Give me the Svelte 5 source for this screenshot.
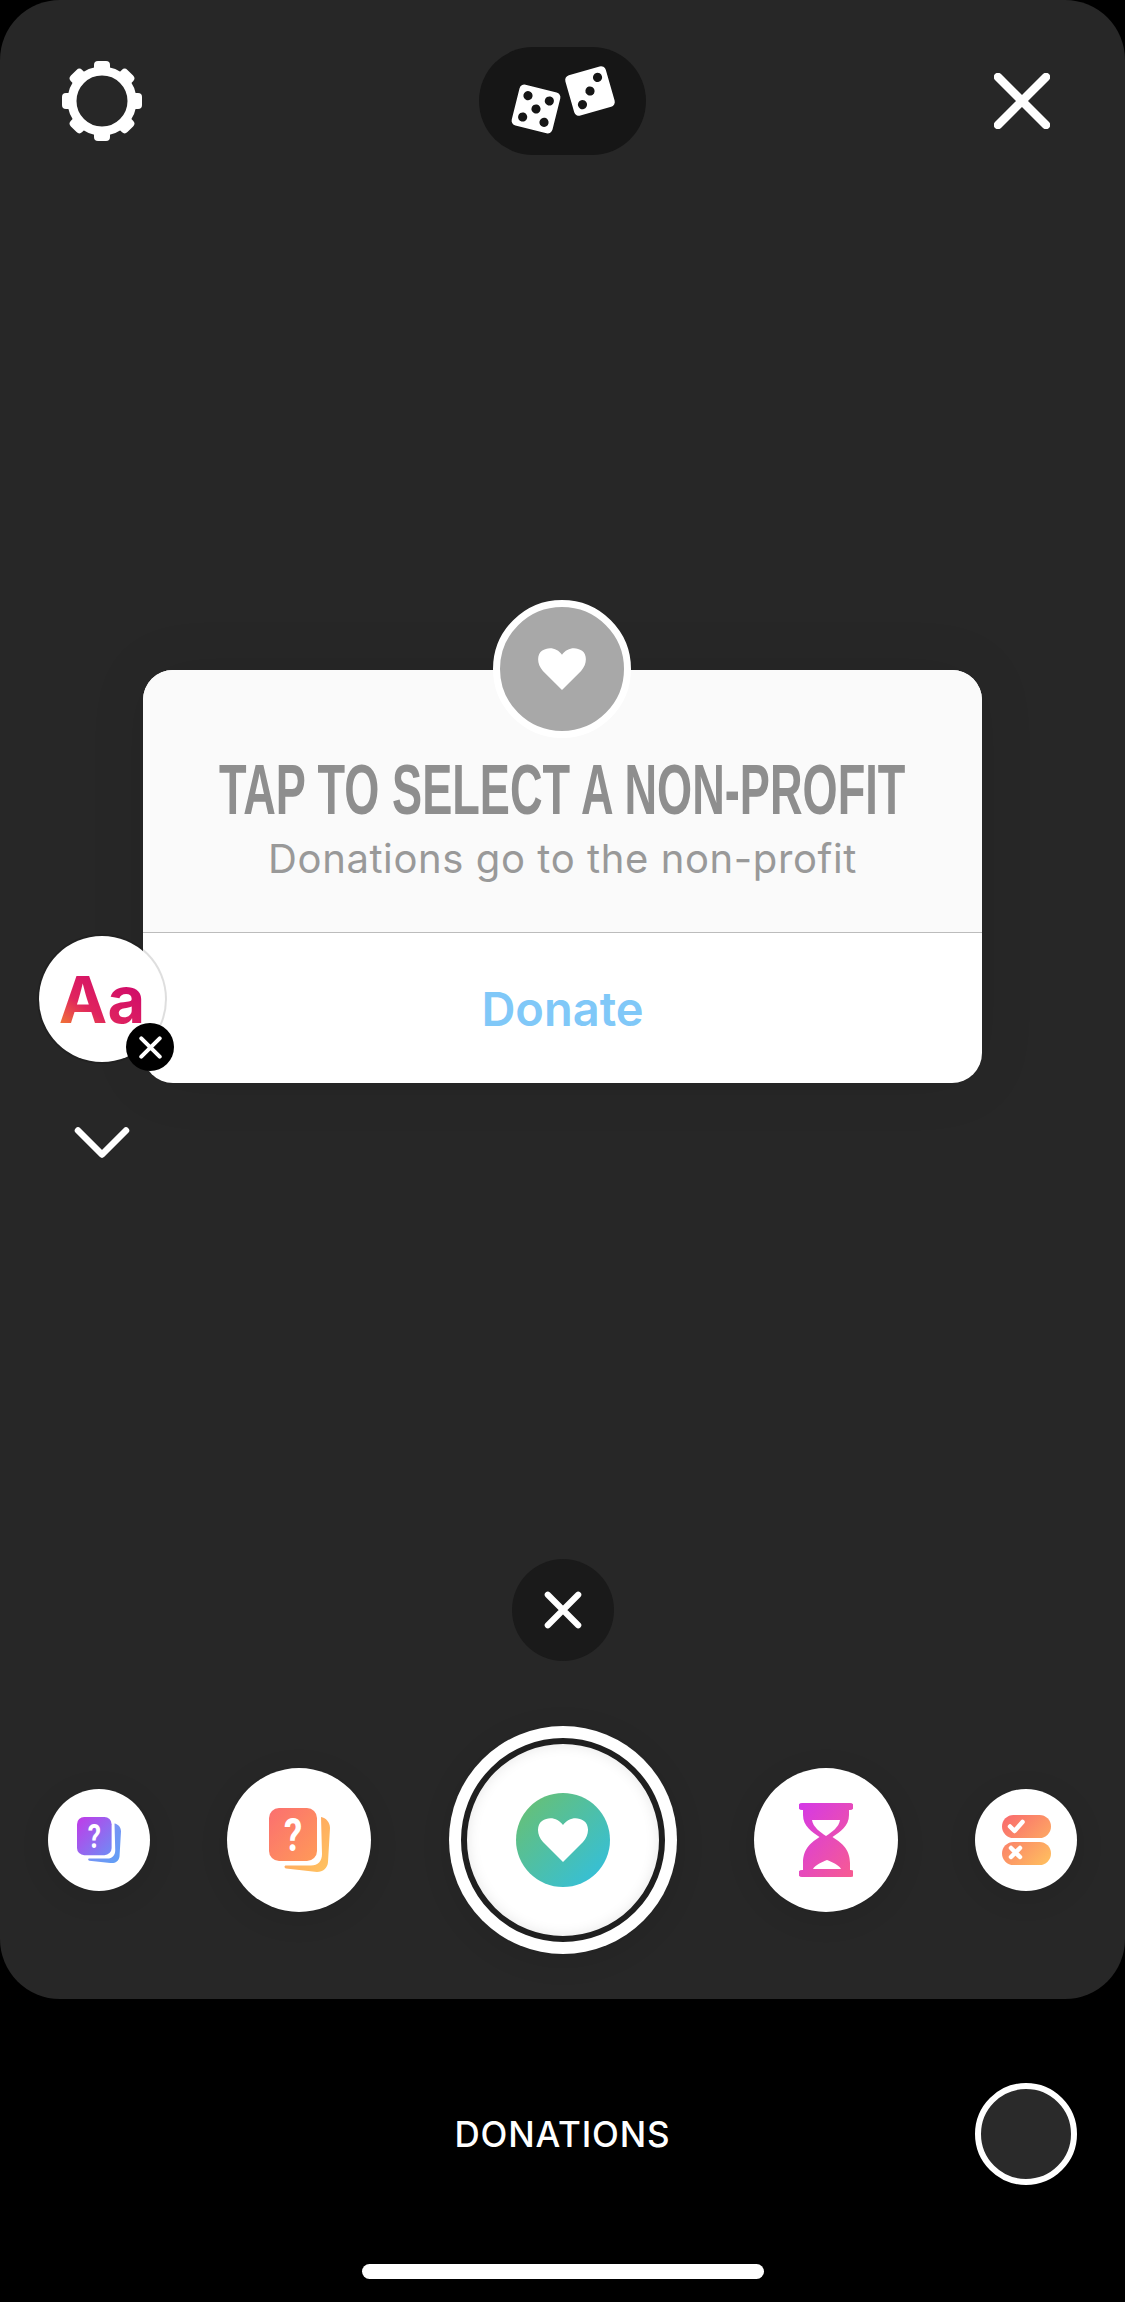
<script>
	const teeth = [0, 45, 90, 135, 180, 225, 270, 315];
	const fivePips = [[-11, -11], [11, -11], [0, 0], [-11, 11], [11, 11]];
	const threePips = [[-11, -11], [0, 0], [11, 11]];
</script>

{#snippet deck(id, from, to, back1, back2, width)}
	<svg viewBox="0 0 61 64" {width} height={width * 64 / 61}>
		<defs>
			<linearGradient id={id} x1="0" y1="0" x2="1" y2="1">
				<stop offset="0" stop-color={from} />
				<stop offset="1" stop-color={to} />
			</linearGradient>
			<linearGradient id={id + 'b'} x1="0" y1="0" x2="1" y2="1">
				<stop offset="0" stop-color={back1} />
				<stop offset="1" stop-color={back2} />
			</linearGradient>
		</defs>
		<rect width="48" height="53" rx="10" fill="url(#{id})" />
		<path
			d="M52 9C57 10 61 14 61 20L59 54C58.7 60 54 64 48 64L17 60.5C15 60 15 57.5 17 57.5L42 57.5C49 57.5 53 53 53 46Z"
			fill="url(#{id}b)"
		/>
		<text transform="translate(24 43) scale(0.78 1)" text-anchor="middle" class="deck-mark">?</text>
	</svg>
{/snippet}

{#snippet cross(size, weight)}
	<svg viewBox="0 0 40 40" width={size} height={size}>
		<path d="M4 4L36 36M36 4L4 36" stroke="#fff" stroke-width={weight} stroke-linecap="round" />
	</svg>
{/snippet}

<div class="screen">
	<div class="stage">
		<header class="topbar">
			<svg class="gear" viewBox="-42 -42 84 84" width="84" height="84">
				{#each teeth as angle}
					<rect x="-8" y="-40" width="16" height="14" rx="4" fill="#fff" transform="rotate({angle})" />
				{/each}
				<circle r="30" fill="none" stroke="#fff" stroke-width="9" />
			</svg>

			<div class="dice-pill">
				<svg viewBox="0 0 125 95" width="125" height="95">
					<g transform="translate(36 55) rotate(14)">
						<rect x="-21" y="-21" width="42" height="42" rx="5" fill="#fff" />
						{#each fivePips as [x, y]}
							<circle cx={x} cy={y} r="4.6" fill="#161616" />
						{/each}
					</g>
					<g transform="translate(90 37) rotate(-16)">
						<rect x="-21" y="-21" width="42" height="42" rx="5" fill="#fff" />
						{#each threePips as [x, y]}
							<circle cx={-x} cy={y} r="4.6" fill="#161616" />
						{/each}
					</g>
				</svg>
			</div>

			<svg class="close" viewBox="0 0 56 56" width="56" height="56">
				<path d="M4 4L52 52M52 4L4 52" stroke="#fff" stroke-width="8.5" stroke-linecap="round" />
			</svg>
		</header>

		<aside class="side-tools">
			<div class="font-sticker">
				<span class="aa">Aa</span>
				<span class="badge">{@render cross(23, 7)}</span>
			</div>
			<svg viewBox="0 0 56 32" width="56" height="32">
				<path d="M4 3.5L28 27.5L52 3.5" fill="none" stroke="#fff" stroke-width="6.5" stroke-linecap="round" stroke-linejoin="round" />
			</svg>
		</aside>

		<section class="card">
			<div class="card-heart">
				<svg viewBox="0 0 50 44" width="48" height="42">
					<path
						d="M25 44L5 24C-1.500 17 -1.500 7 4 3C11 -2 20 0 25 7C30 0 39 -2 46 3C51.500 7 51.500 17 45 24Z"
						fill="#fff"
					/>
				</svg>
			</div>
			<div class="card-head">
				<h1><span>TAP TO SELECT A NON-PROFIT</span></h1>
				<p>Donations go to the non-profit</p>
			</div>
			<div class="card-foot">Donate</div>
		</section>

		<button class="dismiss" aria-label="Dismiss">{@render cross(38, 6.5)}</button>

		<div class="tray">
			<div class="tool small">
				{@render deck('deckA', '#c13ae8', '#6f8cf5', '#8a8af5', '#5fa0f5', 44)}
			</div>
			<div class="tool">
				{@render deck('deckB', '#fb6f70', '#ff9a58', '#ff9a60', '#ffc460', 61)}
			</div>
			<div class="tool main">
				<div class="main-inner">
					<div class="main-badge">
						<svg viewBox="0 0 50 44" width="50" height="44">
							<path
								d="M25 44L5 24C-1.500 17 -1.500 7 4 3C11 -2 20 0 25 7C30 0 39 -2 46 3C51.500 7 51.500 17 45 24Z"
								fill="#fff"
							/>
						</svg>
					</div>
				</div>
			</div>
			<div class="tool">
				<svg viewBox="0 0 54 74" width="54" height="74">
					<defs>
						<linearGradient id="glass" x1="0" y1="0" x2="1" y2="1">
							<stop offset="0" stop-color="#d438e8" />
							<stop offset="1" stop-color="#f85c90" />
						</linearGradient>
					</defs>
					<path
						d="M3 0H51A3 3 0 0 1 51 7H50V12C50 23 41 29 33.500 34C41 39 51 45 51 60V67H52A3.500 3.500 0 0 1 52 74H3A3.500 3.500 0 0 1 3 67H4V60C4 45 13 39 20.500 34C13 29 4 23 4 12V7H3A3 3 0 0 1 3 0Z"
						fill="url(#glass)"
					/>
					<path d="M13 17H41C40 24 33 29 27 33C21 29 14 24 13 17Z" fill="#fff" />
					<path d="M14 66C16 62 23 59 28 57C33 59 40 62 42 66Z" fill="#fff" />
				</svg>
			</div>
			<div class="tool small">
				<svg viewBox="0 0 49 50" width="49" height="50">
					<defs>
						<linearGradient id="poll" gradientUnits="userSpaceOnUse" x1="0" y1="0" x2="49" y2="50">
							<stop offset="0" stop-color="#f9686e" />
							<stop offset="1" stop-color="#ffc25e" />
						</linearGradient>
					</defs>
					<rect width="49" height="23" rx="11.500" fill="url(#poll)" />
					<rect y="27" width="49" height="23" rx="11.500" fill="url(#poll)" />
					<path d="M8 11.500L12.500 16L20.500 7" fill="none" stroke="#fff" stroke-width="4.500" stroke-linecap="round" stroke-linejoin="round" />
					<path d="M9 33L18 42M18 33L9 42" stroke="#fff" stroke-width="4.500" stroke-linecap="round" />
				</svg>
			</div>
		</div>
	</div>

	<footer class="bottom">
		<div class="mode-row">
			<span></span>
			<span class="mode">DONATIONS</span>
			<span class="swatch"></span>
		</div>
		<div class="home-bar"></div>
	</footer>
</div>

<style>
	:global(body) {
		background: #000;
	}
	.screen {
		width: 1125px;
		height: 2302px;
		display: flex;
		flex-direction: column;
		overflow: hidden;
		background: #000;
		font-family: Inter, 'Liberation Sans', sans-serif;
	}
	.stage {
		position: relative;
		flex: none;
		height: 1999px;
		display: flex;
		flex-direction: column;
		align-items: center;
		background: #272727;
		border-radius: 60px;
	}
	.topbar {
		align-self: stretch;
		display: grid;
		grid-template-columns: 1fr auto 1fr;
		align-items: center;
		margin-top: 47px;
		padding: 0 60px;
		height: 108px;
	}
	.dice-pill {
		width: 167px;
		height: 108px;
		display: flex;
		align-items: center;
		justify-content: center;
		border-radius: 54px;
		background: #161616;
	}
	.close {
		justify-self: end;
		margin-right: 15px;
	}
	.card {
		position: relative;
		margin-top: 515px;
		width: 839px;
		height: 413px;
		display: flex;
		flex-direction: column;
		background: #fff;
		border-radius: 30px;
		box-shadow: 0 0 60px rgba(0, 0, 0, 0.08);
	}
	.card-heart {
		position: absolute;
		left: 350px;
		top: -70px;
		width: 124px;
		height: 124px;
		display: flex;
		align-items: center;
		justify-content: center;
		border: 7px solid #fff;
		border-radius: 50%;
		background: #a8a8a8;
	}
	.card-head {
		height: 263px;
		box-sizing: border-box;
		padding-top: 85px;
		display: flex;
		flex-direction: column;
		align-items: center;
		background: #fafafa;
		border-bottom: 1px solid #bcbcbc;
		border-radius: 30px 30px 0 0;
	}
	h1 {
		margin: 0;
		font-family: 'Liberation Sans', sans-serif;
		font-size: 70px;
		line-height: 70px;
		font-weight: 700;
		color: #8e8e8e;
		white-space: nowrap;
	}
	h1 span {
		display: inline-block;
		transform: scaleX(0.645);
	}
	.card-head p {
		margin: 10px 0 0;
		font-size: 40px;
		line-height: 48px;
		letter-spacing: 0.6px;
		color: #999;
		white-space: nowrap;
	}
	.card-foot {
		flex: 1;
		display: flex;
		align-items: center;
		justify-content: center;
		font-size: 47px;
		font-weight: 600;
		color: #80c8f8;
	}
	.side-tools {
		position: absolute;
		z-index: 2;
		left: 39px;
		top: 936px;
		width: 126px;
		display: flex;
		flex-direction: column;
		align-items: center;
		gap: 65px;
	}
	.font-sticker {
		position: relative;
		width: 126px;
		height: 126px;
		display: flex;
		align-items: center;
		justify-content: center;
		background: #fff;
		border-radius: 50%;
		box-shadow: 0 0 0 2px rgba(0, 0, 0, 0.13);
	}
	.aa {
		font-size: 65px;
		font-weight: 700;
		line-height: 1;
		background: linear-gradient(35deg, #f58a2b 0%, #e0245e 35%, #c9006f 100%);
		-webkit-background-clip: text;
		background-clip: text;
		color: transparent;
	}
	.badge {
		position: absolute;
		right: -9px;
		bottom: -9px;
		width: 48px;
		height: 48px;
		display: flex;
		align-items: center;
		justify-content: center;
		background: #000;
		border-radius: 50%;
	}
	.dismiss {
		margin-top: 476px;
		width: 102px;
		height: 102px;
		padding: 0;
		display: flex;
		align-items: center;
		justify-content: center;
		border: 0;
		border-radius: 50%;
		background: #1a1a1a;
	}
	.tray {
		align-self: stretch;
		margin-top: 65px;
		padding: 0 48px;
		display: flex;
		justify-content: space-between;
		align-items: center;
	}
	.tool {
		width: 144px;
		height: 144px;
		display: flex;
		align-items: center;
		justify-content: center;
		background: #fff;
		border-radius: 50%;
		box-shadow: 0 6px 30px rgba(0, 0, 0, 0.1);
	}
	.tool.small {
		width: 102px;
		height: 102px;
	}
	.tool.main {
		width: 228px;
		height: 228px;
	}
	.main-inner {
		width: 192px;
		height: 192px;
		box-sizing: content-box;
		display: flex;
		align-items: center;
		justify-content: center;
		background: #fff;
		border: 6px solid #1f1f1f;
		border-radius: 50%;
		box-shadow: inset 0 0 14px rgba(0, 0, 0, 0.1);
	}
	.main-badge {
		width: 94px;
		height: 94px;
		display: flex;
		align-items: center;
		justify-content: center;
		border-radius: 50%;
		background: linear-gradient(135deg, #6cc06c, #2fbfe4);
	}
	.bottom {
		flex: 1;
		padding-top: 84px;
	}
	.mode-row {
		display: grid;
		grid-template-columns: 1fr auto 1fr;
		align-items: center;
		height: 102px;
	}
	.mode {
		font-size: 35px;
		font-weight: 500;
		letter-spacing: 0.8px;
		color: #fff;
	}
	.swatch {
		justify-self: end;
		width: 90px;
		height: 90px;
		margin-right: 48px;
		background: #2a2a2a;
		border: 6px solid #fff;
		border-radius: 50%;
	}
	.home-bar {
		width: 402px;
		height: 15px;
		margin: 79px auto 0;
		background: #fff;
		border-radius: 8px;
	}
	.deck-mark {
		font-family: Roboto, 'Liberation Sans', sans-serif;
		font-size: 47px;
		font-weight: 700;
		fill: #fff;
	}
</style>
